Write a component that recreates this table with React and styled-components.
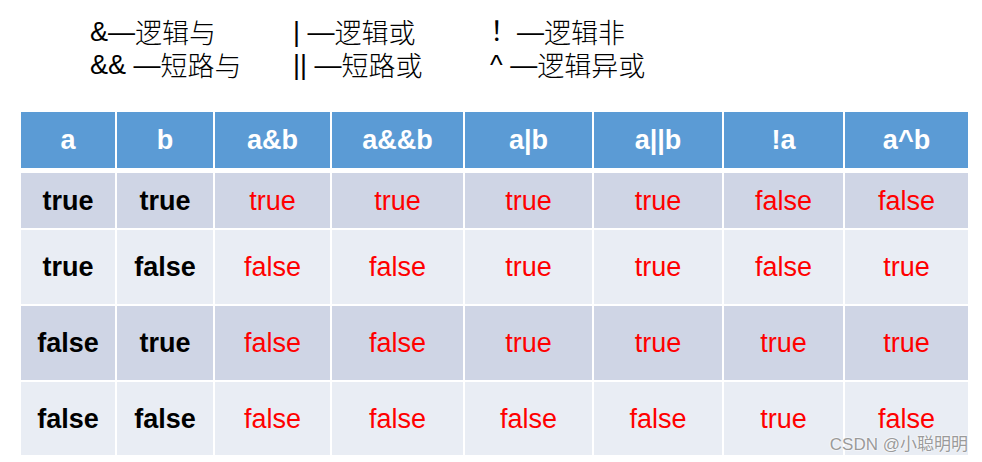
import styled, { createGlobalStyle } from 'styled-components';

const GlobalStyle = createGlobalStyle`
  html, body {
    margin: 0;
    padding: 0;
    background: #ffffff;
  }
`;

const Page = styled.div`
  position: relative;
  width: 982px;
  height: 462px;
  background: #ffffff;
  font-family: 'Liberation Sans', Arial, sans-serif;
  overflow: hidden;
`;

const Legend = styled.div`
  display: grid;
  grid-template-columns: 203px 197px auto;
  grid-auto-rows: 33px;
  padding: 15px 0 0 90px;
  font-family: 'Liberation Sans', 'Noto Sans CJK SC', sans-serif;
  font-size: 27px;
  color: #000;
  align-items: center;
  height: 112px;
  box-sizing: border-box;
  align-content: start;
`;

const Item = styled.span`
  display: flex;
  align-items: center;
  height: 33px;
  white-space: pre;
  line-height: 30px;
`;

const Cjk = styled.span`
  display: inline-block;
  height: 30px;
  line-height: 30px;
  font-family: 'Noto Sans CJK SC', sans-serif;
  font-weight: 300;
`;

const Table = styled.div`
  display: grid;
  grid-template-columns: 94px 96px 115px 131px 127px 128px 119px 123px;
  grid-template-rows: 56px 58px 74px 74px 73px;
  column-gap: 2px;
  row-gap: 2px;
  margin-left: 21px;
  width: 947px;
`;

const HeadRow = styled.div`
  display: contents;
`;

const HeadCell = styled.div`
  background: #5b9bd5;
  color: #ffffff;
  font-weight: bold;
  font-size: 27px;
  display: flex;
  align-items: center;
  justify-content: center;
  padding-top: 1px;
`;

const Cell = styled.div`
  background: ${(p) => (p.$dark ? '#cfd5e5' : '#e9edf4')};
  color: ${(p) => (p.$bold ? '#000000' : '#ff0000')};
  font-weight: ${(p) => (p.$bold ? 'bold' : 'normal')};
  font-size: 27px;
  display: flex;
  align-items: center;
  justify-content: center;
  padding-top: 1px;
  ${(p) => (p.$first ? 'margin-top: 3px;' : '')}
`;

const Watermark = styled.div`
  position: absolute;
  right: 14px;
  top: 430px;
  font-family: 'Liberation Sans', 'Noto Sans CJK SC', sans-serif;
  font-size: 17px;
  color: #9a9a9a;
  text-shadow: 0 0 2px #fff, 0 0 2px #fff;
  white-space: pre;
`;

const heads = ['a', 'b', 'a&b', 'a&&b', 'a|b', 'a||b', '!a', 'a^b'];

const rows = [
  ['true', 'true', 'true', 'true', 'true', 'true', 'false', 'false'],
  ['true', 'false', 'false', 'false', 'true', 'true', 'false', 'true'],
  ['false', 'true', 'false', 'false', 'true', 'true', 'true', 'true'],
  ['false', 'false', 'false', 'false', 'false', 'false', 'true', 'false'],
];

const legend = [
  ['&—', '逻辑与'],
  ['| —', '逻辑或'],
  ['！—', '逻辑非'],
  ['&& —', '短路与'],
  ['|| —', '短路或'],
  ['^ —', '逻辑异或'],
];

const App = () => {
  return (
    <Page>
      <GlobalStyle />
      <Legend>
        {legend.map((e, i) => (
          <Item key={i}>
            {e[0]}
            <Cjk>{e[1]}</Cjk>
          </Item>
        ))}
      </Legend>
      <Table>
        <HeadRow>
          {heads.map((h) => (
            <HeadCell key={h}>{h}</HeadCell>
          ))}
        </HeadRow>
        {rows.map((r, i) =>
          r.map((v, j) => (
            <Cell key={`${i}-${j}`} $dark={i % 2 === 0} $bold={j < 2} $first={i === 0}>
              {v}
            </Cell>
          ))
        )}
      </Table>
      <Watermark>CSDN @小聪明明</Watermark>
    </Page>
  );
};

export default App;
